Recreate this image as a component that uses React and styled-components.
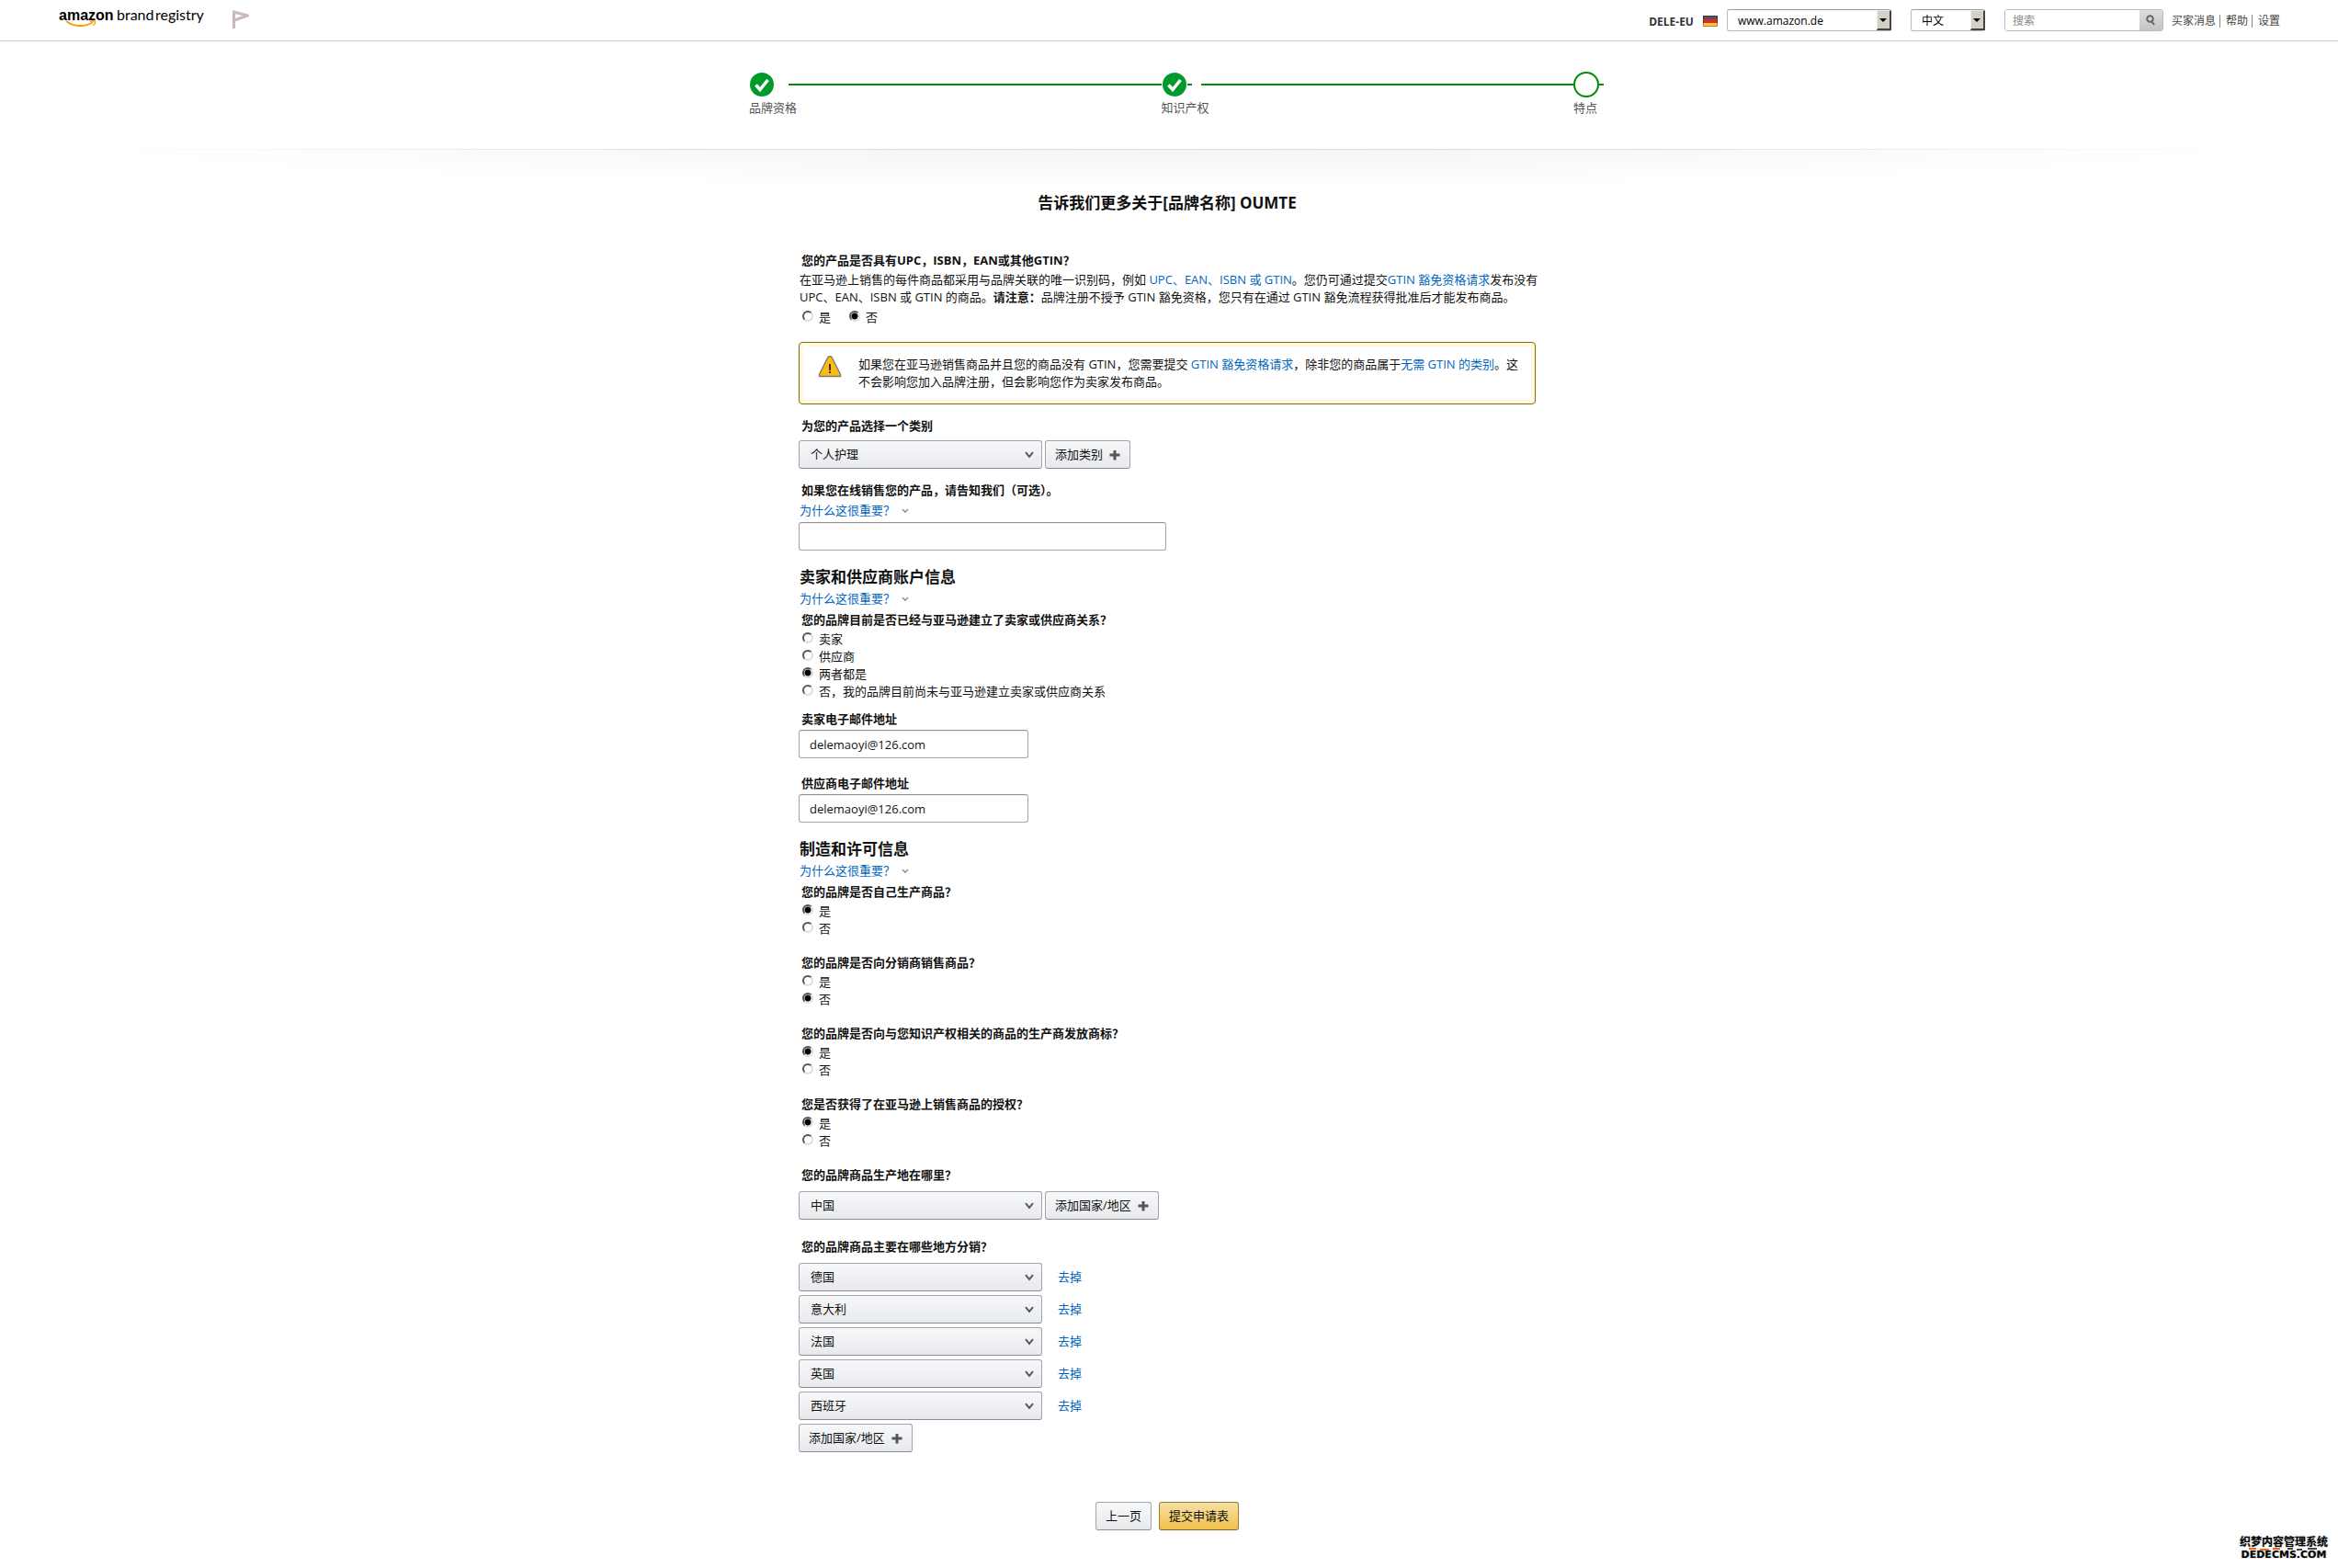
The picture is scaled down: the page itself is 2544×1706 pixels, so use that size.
import React, { useState } from "react";
import styled, { createGlobalStyle } from "styled-components";

const regions = ["德国", "意大利", "法国", "英国", "西班牙"];
const countries = ["中国", ...regions];

const yesNoQuestions = [
  { id: "makes", text: "您的品牌是否自己生产商品？", initial: "是" },
  { id: "distributes", text: "您的品牌是否向分销商销售商品？", initial: "否" },
  { id: "licenses", text: "您的品牌是否向与您知识产权相关的商品的生产商发放商标？", initial: "是" },
  { id: "authorized", text: "您是否获得了在亚马逊上销售商品的授权？", initial: "是" },
];

const relationOptions = [
  "卖家",
  "供应商",
  "两者都是",
  "否，我的品牌目前尚未与亚马逊建立卖家或供应商关系",
];

const Logo = () => (
  <svg width="160" height="26" viewBox="0 0 160 26" role="img" aria-label="amazon brand registry">
    <text x="0" y="15" fontFamily="Liberation Sans, sans-serif" fontWeight="700" fontSize="16" fill="#000">amazon</text>
    <text x="63" y="15" fontFamily="Lato, sans-serif" fontSize="16" fill="#000">brand</text>
    <text x="105" y="15" fontFamily="Lato, sans-serif" fontSize="16" fill="#000">registry</text>
    <path d="M8 16 C16 22.500 28 22.500 37 17.500" fill="none" stroke="#f90" strokeWidth="2" />
    <path d="M34 16.500 C37 15.500 39.500 15.500 39.500 16.500 C39.500 18 38.500 20 37.500 21" fill="none" stroke="#f90" strokeWidth="1.500" />
  </svg>
);

const FlagOutline = () => (
  <svg width="18" height="20" viewBox="0 0 18 20" fill="none" stroke="#c8bab8" strokeWidth="3" aria-hidden="true">
    <path d="M1.500 20 V2 L16.500 6 L2 11" />
  </svg>
);

const GermanFlag = () => (
  <svg width="16" height="12" viewBox="0 0 16 12" role="img" aria-label="DE">
    <rect width="16" height="4" fill="#555" />
    <rect y="4" width="16" height="4" fill="#e3262b" />
    <rect y="8" width="16" height="4" fill="#fc3" />
    <rect x="0.500" y="0.500" width="15" height="11" fill="none" stroke="#000" strokeOpacity="0.350" />
  </svg>
);

const SearchIcon = () => (
  <svg width="10" height="12" viewBox="0 0 10 12" fill="none" stroke="#666" strokeWidth="2" aria-hidden="true">
    <circle cx="4.500" cy="4.500" r="3.300" />
    <path d="M6 7 L9 11" />
  </svg>
);

const Chevron = () => (
  <svg width="10" height="8" viewBox="0 0 10 8" fill="none" stroke="#555b60" strokeWidth="2" aria-hidden="true">
    <path d="M1 1.200 L5 6 L9 1.200" />
  </svg>
);

const SmallChevron = () => (
  <svg width="8" height="6" viewBox="0 0 8 6" fill="none" stroke="#888" strokeWidth="1.300" aria-hidden="true">
    <path d="M1 1 L4 4.300 L7 1" />
  </svg>
);

const Plus = () => (
  <svg width="12" height="12" viewBox="0 0 12 12" aria-hidden="true">
    <path d="M4.500 1 H7.500 V4.500 H11.500 V7.500 H7.500 V11.500 H4.500 V7.500 H0.500 V4.500 H4.500 Z" fill="#555" />
  </svg>
);

const DoneCircle = () => (
  <svg width="28" height="28" viewBox="0 0 28 28" aria-hidden="true">
    <circle cx="14" cy="14" r="13" fill="#009a2c" />
    <path d="M7.500 14.500 L12 19.500 L20.500 9" fill="none" stroke="#fff" strokeWidth="3.500" />
  </svg>
);

const OpenCircle = () => (
  <svg width="28" height="28" viewBox="0 0 28 28" aria-hidden="true">
    <circle cx="14" cy="14" r="13" fill="#fff" stroke="#078a07" strokeWidth="2" />
  </svg>
);

const Warning = () => (
  <svg width="26" height="24" viewBox="0 0 26 24" aria-hidden="true">
    <path d="M11 1.500 Q13 0 15 1.500 L24.500 20.500 V22.500 H1.500 V20.500 Z" fill="#fdbb0f" stroke="#77797c" strokeWidth="1.300" />
    <rect x="12" y="9" width="2" height="7" fill="#333" />
    <rect x="12" y="17" width="2" height="2" fill="#333" />
  </svg>
);

const ArrowSelect = ({ label, options, $width }) => (
  <ClassicSelect $width={$width}>
    <select aria-label={label}>
      {options.map((option) => <option key={option}>{option}</option>)}
    </select>
    <ArrowBox>
      <svg width="8" height="4" viewBox="0 0 8 4" aria-hidden="true">
        <path d="M0 0 H8 L4 4 Z" fill="#000" />
      </svg>
    </ArrowBox>
  </ClassicSelect>
);

const Dropdown = ({ label, options, initial }) => (
  <DropdownBox>
    <select aria-label={label} defaultValue={initial}>
      {options.map((option) => <option key={option}>{option}</option>)}
    </select>
    <ChevronSpot><Chevron /></ChevronSpot>
  </DropdownBox>
);

const RadioGroup = ({ name, label, options, initial, inline }) => {
  const [value, setValue] = useState(initial);

  return (
    <RadioList role="radiogroup" aria-label={label} $inline={inline}>
      {options.map((option) => (
        <RadioLabel key={option}>
          <Radio name={name} checked={value === option} onChange={() => setValue(option)} />
          {option}
        </RadioLabel>
      ))}
    </RadioList>
  );
};

const WhyLink = () => (
  <Why href="#">
    为什么这很重要？ <SmallChevron />
  </Why>
);

const App = () => {
  const [distribution, setDistribution] = useState(regions);

  return (
    <Page>
      <GlobalStyle />
      <Header>
        <Brand>
          <Logo />
          <FlagOutline />
        </Brand>
        <Tools>
          <Account>DELE-EU <GermanFlag /></Account>
          <ArrowSelect label="站点" options={["www.amazon.de"]} $width={179} />
          <ArrowSelect label="语言" options={["中文"]} $width={81} />
          <Search>
            <input type="search" placeholder="搜索" aria-label="搜索" />
            <button type="button" aria-label="搜索"><SearchIcon /></button>
          </Search>
          <Links>
            <a href="#">买家消息</a>
            <a href="#">帮助</a>
            <a href="#">设置</a>
          </Links>
        </Tools>
      </Header>

      <Steps>
        <Step>
          <Track><DoneCircle /><Line /></Track>
          <StepLabel>品牌资格</StepLabel>
        </Step>
        <Step>
          <Track><DoneCircle /><Dash /><Line $afterDash /></Track>
          <StepLabel>知识产权</StepLabel>
        </Step>
        <Step $last>
          <Track><OpenCircle /><Dash /></Track>
          <StepLabel>特点</StepLabel>
        </Step>
      </Steps>
      <Divider />

      <Main>
        <Form onSubmit={(e) => e.preventDefault()}>
          <Title>告诉我们更多关于[品牌名称] OUMTE</Title>

          <Question>您的产品是否具有UPC，ISBN，EAN或其他GTIN？</Question>
          <Text>
            在亚马逊上销售的每件商品都采用与品牌关联的唯一识别码，例如 <Link href="#">UPC、EAN、ISBN 或 GTIN</Link>。您仍可通过提交<Link href="#">GTIN 豁免资格请求</Link>发布没有 UPC、EAN、ISBN 或 GTIN 的商品。<b>请注意：</b>品牌注册不授予 GTIN 豁免资格，您只有在通过 GTIN 豁免流程获得批准后才能发布商品。
          </Text>
          <RadioGroup name="gtin" label="GTIN" options={["是", "否"]} initial="否" inline />

          <Alert>
            <Warning />
            <p>
              如果您在亚马逊销售商品并且您的商品没有 GTIN，您需要提交 <Link href="#">GTIN 豁免资格请求</Link>，除非您的商品属于<Link href="#">无需 GTIN 的类别</Link>。这不会影响您加入品牌注册，但会影响您作为卖家发布商品。
            </p>
          </Alert>

          <Field $top={14} $gap={6}>
            <Question>为您的产品选择一个类别</Question>
            <Row>
              <Dropdown label="类别" options={["个人护理"]} />
              <Button type="button">添加类别 <Plus /></Button>
            </Row>
          </Field>

          <Field $top={14} $gap={3}>
            <Question as="label" htmlFor="website">如果您在线销售您的产品，请告知我们（可选）。</Question>
            <WhyLink />
            <Input id="website" $width={400} />
          </Field>

          <Heading>卖家和供应商账户信息</Heading>
          <WhyLink />
          <Field $top={4} $gap={2}>
            <Question>您的品牌目前是否已经与亚马逊建立了卖家或供应商关系？</Question>
            <RadioGroup name="relation" label="关系" options={relationOptions} initial="两者都是" />
          </Field>
          <Field $top={11} $gap={2}>
            <Question as="label" htmlFor="seller">卖家电子邮件地址</Question>
            <Input id="seller" type="email" defaultValue="delemaoyi@126.com" $width={250} />
          </Field>
          <Field $top={18} $gap={2}>
            <Question as="label" htmlFor="vendor">供应商电子邮件地址</Question>
            <Input id="vendor" type="email" defaultValue="delemaoyi@126.com" $width={250} />
          </Field>

          <Heading>制造和许可信息</Heading>
          <WhyLink />
          {yesNoQuestions.map((question, i) => (
            <Field key={question.id} $top={i === 0 ? 4 : 18} $gap={2}>
              <Question>{question.text}</Question>
              <RadioGroup name={question.id} label={question.text} options={["是", "否"]} initial={question.initial} />
            </Field>
          ))}

          <Field $top={18} $gap={8}>
            <Question>您的品牌商品生产地在哪里？</Question>
            <Row>
              <Dropdown label="生产地" options={countries} initial="中国" />
              <Button type="button">添加国家/地区 <Plus /></Button>
            </Row>
          </Field>

          <Field $top={20} $gap={8}>
            <Question>您的品牌商品主要在哪些地方分销？</Question>
            <RegionList>
              {distribution.map((region) => (
                <Row key={region} $gap={17}>
                  <Dropdown label="分销地" options={countries} initial={region} />
                  <Link
                    href="#"
                    onClick={(e) => {
                      e.preventDefault();
                      setDistribution(distribution.filter((r) => r !== region));
                    }}
                  >
                    去掉
                  </Link>
                </Row>
              ))}
              <Row><Button type="button">添加国家/地区 <Plus /></Button></Row>
            </RegionList>
          </Field>

          <Actions>
            <Button type="button">上一页</Button>
            <Button type="submit" $primary>提交申请表</Button>
          </Actions>
        </Form>
      </Main>

      <Watermark>
        <span>织梦内容管理系统</span>
        <svg width="80" height="3" viewBox="0 0 80 3" aria-hidden="true">
          <path d="M2 1 H10 M14 2 H24 M28 1 H36" stroke="#f60" strokeWidth="2" />
          <path d="M44 1 H50 M54 2 H60 M66 1 H76" stroke="#444" strokeWidth="2" />
        </svg>
        <small>DEDECMS.COM</small>
      </Watermark>
    </Page>
  );
};

export default App;

const GlobalStyle = createGlobalStyle`
  * {
    box-sizing: border-box;
  }

  body {
    margin: 0;
    background: #fff;
    color: #111;
    font: 13px/19px "Open Sans", "Noto Sans CJK SC", sans-serif;
  }

  input, select, button {
    font: inherit;
    color: inherit;
  }

  svg {
    display: block;
    flex: none;
  }
`;

const Page = styled.div`
  position: relative;
  min-height: 100vh;
`;

const Header = styled.header`
  display: flex;
  justify-content: space-between;
  height: 45px;
  padding: 0 63px;
  border-bottom: 1px solid #ccc;
`;

const Brand = styled.div`
  display: flex;
  gap: 29px;
  padding: 7px 0 0 1px;

  svg + svg {
    margin-top: 4px;
  }
`;

const Tools = styled.div`
  display: flex;
  align-items: center;
  font-size: 12px;
`;

const Account = styled.div`
  display: flex;
  align-items: center;
  gap: 10px;
  margin-right: 10px;
  padding-top: 2px;
  font-size: 12px;
  font-weight: bold;
  color: #333;
`;

const ClassicSelect = styled.div`
  position: relative;
  width: ${({ $width }) => $width}px;
  margin-right: 21px;

  select {
    appearance: none;
    display: block;
    width: 100%;
    height: 24px;
    padding: 0 20px 0 11px;
    border: 1px solid #bbb;
    border-top-color: #999;
    border-radius: 3px;
    background: #fff;
    color: #000;
  }
`;

const ArrowBox = styled.span`
  position: absolute;
  top: 1px;
  right: 0;
  display: flex;
  align-items: center;
  justify-content: center;
  width: 16px;
  height: 22px;
  background: #d4d0c8;
  border: 1px solid #eee;
  border-right: 2px solid #444;
  border-bottom: 2px solid #444;
  pointer-events: none;
`;

const Search = styled.div`
  display: flex;
  width: 173px;
  height: 24px;
  border: 1px solid #bbb;
  border-radius: 3px;
  overflow: hidden;

  input {
    flex: 1;
    min-width: 0;
    padding: 0 8px;
    border: 0;
    outline: 0;
  }

  input::placeholder {
    color: #888;
  }

  button {
    display: flex;
    align-items: center;
    justify-content: center;
    width: 25px;
    padding: 0;
    border: 0;
    background: linear-gradient(#ddd, #c4c4c4);
  }
`;

const Links = styled.nav`
  display: flex;
  align-items: center;
  margin-left: 9px;
  padding-top: 2px;

  a {
    color: #444;
    line-height: 14px;
    text-decoration: none;
  }

  a + a {
    margin-left: 4px;
    padding-left: 6px;
    border-left: 1px solid #888;
  }
`;

const Steps = styled.div`
  display: flex;
  max-width: 946px;
  margin: 0 auto;
  padding: 33px 0 35px 16px;
`;

const Step = styled.div`
  flex: ${({ $last }) => ($last ? "none" : "1")};
`;

const Track = styled.div`
  display: flex;
  align-items: center;
`;

const Line = styled.div`
  flex: 1;
  height: 2px;
  margin-left: ${({ $afterDash }) => ($afterDash ? 10 : 15)}px;
  background: #078a07;
`;

const Dash = styled.div`
  width: 5px;
  height: 2px;
  background: #078a07;
`;

const StepLabel = styled.div`
  margin-top: 2px;
  color: #555;
`;

const Divider = styled.div`
  height: 40px;
  border: solid transparent;
  border-width: 1px 0 0;
  border-image: linear-gradient(to right, #fff 3%, #ddd 30%, #ddd 70%, #fff 97%) 1;
  background: radial-gradient(ellipse 45% 100% at 50% 0, #f4f4f4, #fff);
`;

const Main = styled.main`
  padding-right: 4px;
`;

const Form = styled.form`
  display: flex;
  flex-direction: column;
  max-width: 802px;
  margin: 0 auto;
  padding: 7px 0 40px;
`;

const Title = styled.h1`
  margin: 0 0 41px;
  font-size: 17px;
  line-height: 24px;
  text-align: center;
`;

const Question = styled.div`
  padding-left: 3px;
  font-weight: bold;
`;

const Text = styled.p`
  margin: 2px -6px 3px 1px;
`;

const Link = styled.a`
  color: #0066c0;
  text-decoration: none;
`;

const Why = styled(Link)`
  display: flex;
  align-items: center;
  gap: 7px;
  padding-left: 1px;
`;

const RadioList = styled.div`
  display: flex;
  flex-direction: ${({ $inline }) => ($inline ? "row" : "column")};
  gap: ${({ $inline }) => ($inline ? "16px" : "0")};
`;

const RadioLabel = styled.label`
  display: flex;
  align-items: center;
  gap: 6px;
  padding-left: 4px;
`;

const Radio = styled.input.attrs({ type: "radio" })`
  appearance: none;
  flex: none;
  width: 12px;
  height: 12px;
  margin: 0 0 3px;
  border: 2px solid;
  border-color: #555 #ddd #ddd #555;
  border-radius: 50%;

  &:checked {
    background: radial-gradient(circle, #000 3px, #fff 4px);
  }
`;

const Alert = styled.div`
  display: flex;
  margin-top: 17px;
  padding: 14px 12px 14px 20px;
  border: 1px solid #8a6d00;
  border-radius: 4px;
  box-shadow: inset 0 0 0 4px #fff9e3;

  p {
    margin: 0 0 0 18px;
  }
`;

const Field = styled.div`
  display: flex;
  flex-direction: column;
  gap: ${({ $gap }) => $gap}px;
  margin-top: ${({ $top }) => $top}px;
`;

const Row = styled.div`
  display: flex;
  align-items: center;
  gap: ${({ $gap = 3 }) => $gap}px;
`;

const RegionList = styled.div`
  display: flex;
  flex-direction: column;
  gap: 4px;
`;

const DropdownBox = styled.div`
  position: relative;
  width: 265px;

  select {
    appearance: none;
    display: block;
    width: 100%;
    height: 31px;
    padding: 0 30px 0 12px;
    border: 1px solid #a2a6ac;
    border-bottom-color: #888c93;
    border-radius: 3px;
    background: linear-gradient(#f7f8fa, #e7e9ec);
  }
`;

const ChevronSpot = styled.span`
  position: absolute;
  top: 12px;
  right: 9px;
  pointer-events: none;
`;

const Button = styled.button`
  display: flex;
  align-items: center;
  gap: 7px;
  height: 31px;
  padding: 0 10px;
  border: 1px solid ${({ $primary }) => ($primary ? "#9c7e31" : "#a2a6ac")};
  border-bottom-color: ${({ $primary }) => ($primary ? "#846a29" : "#888c93")};
  border-radius: 3px;
  background: ${({ $primary }) =>
    $primary ? "linear-gradient(#f7dfa5, #f0c14b)" : "linear-gradient(#f7f8fa, #e7e9ec)"};
`;

const Input = styled.input`
  width: ${({ $width }) => $width}px;
  max-width: 100%;
  height: 31px;
  padding: 0 11px;
  border: 1px solid #a6a6a6;
  border-top-color: #949494;
  border-radius: 3px;
  box-shadow: inset 0 1px 0 #eee;
`;

const Heading = styled.h2`
  margin: 17px 0 2px 1px;
  font-size: 17px;
  line-height: 24px;
`;

const Actions = styled.div`
  display: flex;
  justify-content: center;
  gap: 8px;
  margin-top: 54px;
`;

const Watermark = styled.div`
  position: absolute;
  right: 11px;
  bottom: 9px;
  display: flex;
  flex-direction: column;
  align-items: center;
  color: #000;
  font-weight: bold;
  text-shadow: 0 0 2px #999;

  span {
    font-size: 12px;
    line-height: 12px;
  }

  small {
    font: bold 11px/10px "DejaVu Sans", sans-serif;
  }
`;
